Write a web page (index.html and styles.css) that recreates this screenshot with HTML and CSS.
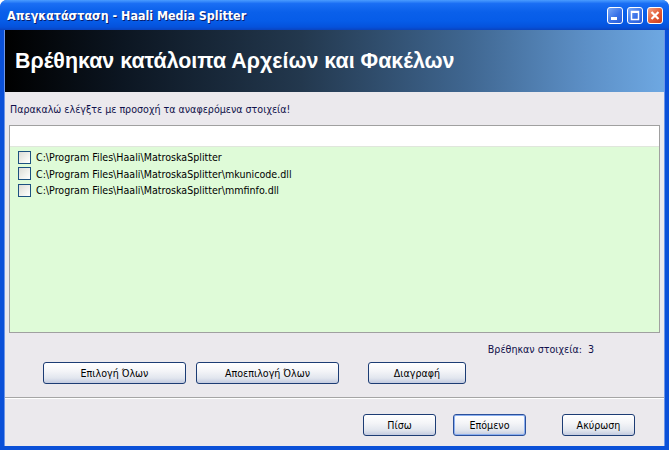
FILE: index.html
```html
<!DOCTYPE html>
<html lang="el">
<head>
    <meta charset="UTF-8">
    <title>Απεγκατάσταση - Haali Media Splitter</title>
    <link rel="stylesheet" href="styles.css">
</head>
<body>
    <div class="ventana">
        <!-- barra de título -->
        <div class="barra-titulo">
            <span class="titulo">Απεγκατάσταση - Haali Media Splitter</span>
            <div class="controles">
                <div class="ctrl">
                    <svg width="14" height="15" viewBox="0 0 14 15"><rect x="3" y="9" width="6" height="3" fill="#fff"/></svg>
                </div>
                <div class="ctrl">
                    <svg width="14" height="15" viewBox="0 0 14 15"><rect x="3.5" y="3.5" width="7" height="8" fill="none" stroke="#fff" stroke-width="1.5"/><rect x="3" y="3" width="8" height="2" fill="#fff"/></svg>
                </div>
                <div class="ctrl cerrar">
                    <svg width="14" height="15" viewBox="0 0 14 15"><path d="M3.5 4 L10.5 11 M10.5 4 L3.5 11" stroke="#fff" stroke-width="2.2"/></svg>
                </div>
            </div>
        </div>

        <div class="contenido">
            <div class="cabecera">Βρέθηκαν κατάλοιπα Αρχείων και Φακέλων</div>

            <div class="cuerpo">
                <div class="aviso">Παρακαλώ ελέγξτε με προσοχή τα αναφερόμενα στοιχεία!</div>

                <div class="lista">
                    <div class="lista-cab"></div>
                    <div class="lista-items">
                        <label class="item"><span class="check"></span>C:\Program Files\Haali\MatroskaSplitter</label>
                        <label class="item"><span class="check"></span>C:\Program Files\Haali\MatroskaSplitter\mkunicode.dll</label>
                        <label class="item"><span class="check"></span>C:\Program Files\Haali\MatroskaSplitter\mmfinfo.dll</label>
                    </div>
                </div>

                <div class="contador">Βρέθηκαν στοιχεία:&nbsp; 3</div>

                <div class="acciones">
                    <button class="btn ancho">Επιλογή Όλων</button>
                    <button class="btn ancho">Αποεπιλογή Όλων</button>
                    <button class="btn medio">Διαγραφή</button>
                </div>
            </div>

            <div class="separador"></div>

            <div class="navegacion">
                <button class="btn corto">Πίσω</button>
                <button class="btn corto foco">Επόμενο</button>
                <button class="btn corto">Ακύρωση</button>
            </div>
        </div>
    </div>
</body>
</html>
```

FILE: styles.css
```css
body {
    margin: 0;
    background-color: #fff;
    font-family: 'DejaVu Sans Condensed', 'DejaVu Sans', sans-serif;
    font-size: 10.6px;
    color: #000;
}
.ventana {
    width: 669px;
    height: 450px;
    display: flex;
    flex-direction: column;
    background-color: #0a50d8;
    border-radius: 7px 7px 0 0;
    overflow: hidden;
}
.barra-titulo {
    height: 30px;
    flex: none;
    display: flex;
    align-items: center;
    justify-content: space-between;
    padding: 0 6px 0 7px;
    background: linear-gradient(to bottom, #4a9cff 0%, #1a6ef4 12%, #0a60ea 40%, #065ce8 70%, #0552dc 90%, #0a44c0 100%);
}
.titulo {
    color: #fff;
    font-family: 'DejaVu Sans Condensed', 'DejaVu Sans', sans-serif;
    font-weight: bold;
    font-size: 12.4px;
    text-shadow: 1px 1px 0 #0a1c6a;
}
.controles {
    display: flex;
    gap: 4px;
}
.ctrl {
    width: 14px;
    height: 15px;
    border: 1px solid #fff;
    border-radius: 3px;
    background: linear-gradient(135deg, #7aa8f6 0%, #3a72e8 55%, #2a5cd8 100%);
    display: flex;
}
.ctrl.cerrar {
    background: linear-gradient(135deg, #f2a488 0%, #e25a34 55%, #cc3e1e 100%);
}
.contenido {
    flex: 1;
    display: flex;
    flex-direction: column;
    margin: 0 4px 4px 4px;
    background-color: #ebe9ed;
    border-left: 1px solid #6c95e8;
    border-right: 1px solid #6c95e8;
}
.cabecera {
    height: 62px;
    flex: none;
    display: flex;
    align-items: center;
    padding-left: 10px;
    color: #fff;
    font-family: 'Liberation Sans', Arial, sans-serif;
    font-weight: bold;
    font-size: 21.4px;
    background: linear-gradient(to right, #000 0%, #0c1622 18%, #23384e 45%, #3f6690 70%, #5c8fc6 88%, #6ea8e2 100%);
}
.cuerpo {
    padding: 11px 4px 0 4px;
    flex: 1;
}
.aviso {
    height: 14px;
    padding-left: 1px;
    color: #10104a;
}
.lista {
    margin-top: 8px;
    height: 206px;
    border: 1px solid #a0a0a0;
    display: flex;
    flex-direction: column;
}
.lista-cab {
    height: 20px;
    background-color: #fff;
    border-bottom: 1px solid #e0e6dc;
}
.lista-items {
    flex: 1;
    background-color: #dffbd8;
    padding-top: 2px;
}
.item {
    height: 16.5px;
    display: flex;
    align-items: center;
    padding-left: 8px;
    color: #000;
}
.check {
    width: 11px;
    height: 11px;
    border: 1px solid #1c5180;
    background: linear-gradient(135deg, #dcdcd6 0%, #f2f2ee 60%, #fff 100%);
    margin-right: 5px;
}
.contador {
    text-align: right;
    padding-right: 66px;
    margin-top: 10px;
    height: 13px;
    color: #10104a;
}
.acciones {
    display: flex;
    margin-top: 6px;
    padding-left: 34px;
}
.btn {
    height: 22px;
    border: 1px solid #1c3c74;
    border-radius: 3px;
    background: linear-gradient(to bottom, #ffffff 0%, #f4f5f8 40%, #e2e6ee 75%, #c3cbe0 100%);
    font-family: 'DejaVu Sans Condensed', 'DejaVu Sans', sans-serif;
    font-size: 10.6px;
    color: #000;
    padding: 0;
}
.ancho {
    width: 143px;
    margin-right: 10px;
}
.medio {
    width: 98px;
    margin-left: 19px;
}
.separador {
    height: 1px;
    background-color: #a5a5a5;
    border-bottom: 1px solid #fff;
    margin-bottom: 15px;
}
.navegacion {
    display: flex;
    padding-left: 358px;
    padding-bottom: 10px;
}
.corto {
    width: 73px;
    margin-right: 17px;
}
.corto:last-child {
    margin-left: 19px;
}
.foco {
    border-color: #2a4f9a;
    box-shadow: inset 0 0 0 1px #8cb0f0;
}
```
